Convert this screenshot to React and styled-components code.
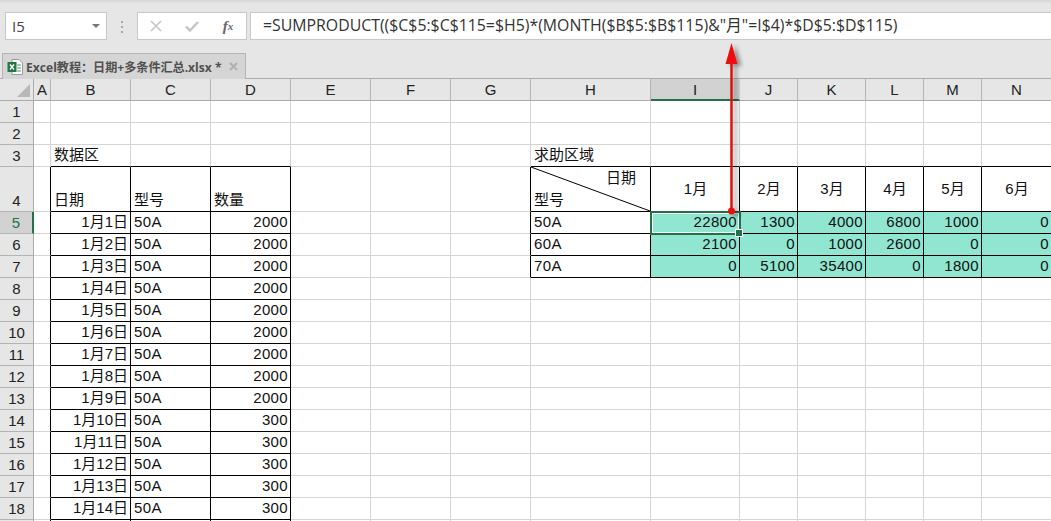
import React from 'react';
import styled, { createGlobalStyle } from 'styled-components';

const GlobalStyle = createGlobalStyle`
  html, body {
    margin: 0;
    height: 521px;
    overflow: hidden;
    background: #fff;
  }
`;

const FONT = `"Liberation Sans", "Noto Sans CJK SC", sans-serif`;
const UI_FONT = `"Open Sans", "Noto Sans CJK SC", sans-serif`;

const COLS = ['A', 'B', 'C', 'D', 'E', 'F', 'G', 'H', 'I', 'J', 'K', 'L', 'M', 'N'];
const COL_WIDTHS = [17, 80, 80, 80, 80, 80, 80, 120, 89, 58, 68, 58, 58, 70];

const Page = styled.div`
  position: relative;
  width: 1051px;
  height: 521px;
  overflow: hidden;
  background: #e6e6e6;
  font-family: ${FONT};
`;

const FormulaBar = styled.div`
  display: flex;
  align-items: flex-start;
  height: 53px;
  box-sizing: border-box;
  padding: 12px 0 0 5px;
  background: linear-gradient(#d6d6d6 0, #e6e6e6 4px);
`;

const NameBox = styled.div`
  display: flex;
  align-items: center;
  justify-content: space-between;
  box-sizing: border-box;
  width: 102px;
  height: 28px;
  padding: 0 6px 0 6px;
  background: #fff;
  border: 1px solid #c8c8c8;
  font-family: ${UI_FONT};
  font-size: 15px;
  color: #444;
`;

const Caret = styled.span`
  width: 0;
  height: 0;
  border-left: 4px solid transparent;
  border-right: 4px solid transparent;
  border-top: 4px solid #777;
`;

const Dots = styled.div`
  display: flex;
  flex-direction: column;
  gap: 3px;
  width: 4px;
  margin: 9px 12px 0 14px;

  span {
    width: 2px;
    height: 2px;
    background: #a6a6a6;
  }
`;

const ActionBox = styled.div`
  display: flex;
  align-items: center;
  box-sizing: border-box;
  width: 110px;
  height: 28px;
  margin-right: 3px;
  background: #fff;
  border: 1px solid #c8c8c8;
`;

const ActionIcon = styled.span`
  display: flex;
  align-items: center;
  justify-content: center;
  width: 36px;
  height: 100%;
  font-family: "Liberation Serif", serif;
  font-style: italic;
  font-weight: 700;
  font-size: 15px;
  color: #666;

  sub {
    font-size: 11px;
    vertical-align: -1px;
    line-height: 0;
  }
`;

const FormulaInput = styled.div`
  flex: 1;
  box-sizing: border-box;
  height: 28px;
  padding: 0 0 0 12px;
  background: #fff;
  border: 1px solid #c8c8c8;
  border-right: none;
  font-family: ${UI_FONT};
  font-size: 15.85px;
  line-height: 25px;
  color: #333;
  white-space: nowrap;
`;

const TabStrip = styled.div`
  height: 26px;
  box-sizing: border-box;
  padding-left: 2px;
  border-bottom: 1px solid #ababab;
`;

const Tab = styled.div`
  display: inline-flex;
  align-items: center;
  box-sizing: border-box;
  width: 244px;
  height: 26px;
  padding: 0 7px 0 4px;
  background: #d5d5d5;
  border: 1px solid #b4b4b4;
  border-bottom: none;
  font-family: ${UI_FONT};
  font-size: 12.1px;
  font-weight: 700;
  color: #505050;
  white-space: nowrap;
`;

const TabLabel = styled.span`
  flex: 1;
  margin-left: 2px;
`;

const TabClose = styled.svg`
  width: 9px;
  height: 9px;
`;

const Grid = styled.div`
  display: grid;
  grid-template-columns: 34px ${COL_WIDTHS.map((w) => `${w}px`).join(' ')};
  grid-template-rows: 22px 22px 22px 22px 45px;
  grid-auto-rows: 22px;
`;

const Corner = styled.div`
  position: relative;
  background: #e6e6e6;
  border-right: 1px solid #ababab;
  border-bottom: 1px solid #ababab;

  &::after {
    content: '';
    position: absolute;
    right: 3px;
    bottom: 3px;
    border-left: 13px solid transparent;
    border-bottom: 13px solid #b8b8b8;
  }
`;

const ColHeader = styled.div`
  display: flex;
  align-items: center;
  justify-content: center;
  box-sizing: border-box;
  background: ${(p) => (p.$active ? '#d2d2d2' : '#e6e6e6')};
  border-right: 1px solid ${(p) => (p.$active ? '#d2d2d2' : '#b4b4b4')};
  border-bottom: ${(p) => (p.$active ? '2px solid #217346' : '1px solid #ababab')};
  font-size: 15px;
  color: #222;
`;

const RowHeader = styled.div`
  display: flex;
  align-items: ${(p) => (p.$height > 22 ? 'flex-end' : 'center')};
  justify-content: center;
  box-sizing: border-box;
  height: ${(p) => p.$height}px;
  padding-bottom: ${(p) => (p.$height > 22 ? 2 : 0)}px;
  background: ${(p) => (p.$active ? '#d2d2d2' : '#e6e6e6')};
  border-bottom: 1px solid #b4b4b4;
  border-right: ${(p) => (p.$active ? '2px solid #217346' : '1px solid #ababab')};
  font-size: 15px;
  color: ${(p) => (p.$active ? '#217346' : '#222')};
`;

const Cell = styled.div`
  position: relative;
  z-index: ${(p) => (p.$selected ? 2 : 'auto')};
  display: flex;
  align-items: ${(p) => p.$valign || 'center'};
  justify-content: ${(p) => p.$align || 'flex-start'};
  box-sizing: border-box;
  height: ${(p) => p.$height}px;
  padding: 0 2px ${(p) => (p.$valign ? 2 : 1)}px 3px;
  background: ${(p) => (p.$fill ? '#90e6d0' : '#fff')};
  border-right: 1px solid ${(p) => (p.$right ? '#000' : p.$fill ? '#84d6c2' : '#d4d4d4')};
  border-bottom: 1px solid ${(p) => (p.$bottom ? '#000' : p.$fill ? '#84d6c2' : '#d4d4d4')};
  font-size: 15px;
  line-height: 18px;
  letter-spacing: ${(p) => (p.$wide ? '0.35px' : 'normal')};
  color: #111;
  white-space: nowrap;
`;

const Selection = styled.div`
  position: absolute;
  left: -1px;
  top: -1px;
  width: 91px;
  height: 24px;
  box-sizing: border-box;
  border: 2px solid #217346;
  box-shadow: inset 0 0 0 1px #fff;
  pointer-events: none;

  &::after {
    content: '';
    position: absolute;
    right: -3px;
    bottom: -3px;
    box-sizing: border-box;
    width: 6px;
    height: 6px;
    background: #217346;
    outline: 1px solid #fff;
  }
`;

const CellText = styled.span`
  position: relative;
  z-index: 1;
`;

const Slash = styled.svg`
  position: absolute;
  left: 0;
  top: 0;
  width: 120px;
  height: 45px;
`;

const CornerTop = styled.span`
  position: absolute;
  right: 14px;
  top: 2px;
`;

const CornerBottom = styled.span`
  position: absolute;
  left: 3px;
  bottom: 2px;
`;

const Arrow = styled.svg`
  position: absolute;
  z-index: 3;
  left: 715px;
  top: 40px;
  width: 36px;
  height: 180px;
  overflow: visible;
  pointer-events: none;
`;

const sales = {
  5: [22800, 1300, 4000, 6800, 1000, 0],
  6: [2100, 0, 1000, 2600, 0, 0],
  7: [0, 5100, 35400, 0, 1800, 0],
};
const models = { 5: '50A', 6: '60A', 7: '70A' };

// row 19 only shows its top border in the window, so it stays empty
const LAST_TEXT_ROW = 18;

const cellProps = (row, idx) => {
  const col = COLS[idx];
  const props = { $height: row === 4 ? 45 : 22 };

  // left table borders, B4 to the bottom of the view
  if (col === 'A' && row >= 4) props.$right = true;
  if (['B', 'C', 'D'].includes(col)) {
    if (row >= 4) props.$right = true;
    if (row >= 3) props.$bottom = true;
  }

  // right table borders, H4:N7
  if (col === 'G' && row >= 4 && row <= 7) props.$right = true;
  if (idx >= 7) {
    if (row >= 4 && row <= 7) props.$right = true;
    if (row >= 3 && row <= 7) props.$bottom = true;
    if (row >= 5 && row <= 7 && idx >= 8) props.$fill = true;
  }
  if (row === 5 && col === 'I') props.$selected = true;
  return props;
};

const cellContent = (row, idx) => {
  const col = COLS[idx];
  if (row > LAST_TEXT_ROW) return {};
  if (row === 3 && col === 'B') return { text: '数据区' };
  if (row === 3 && col === 'H') return { text: '求助区域' };
  if (row === 4) {
    if (col === 'B') return { text: '日期', $valign: 'flex-end' };
    if (col === 'C') return { text: '型号', $valign: 'flex-end' };
    if (col === 'D') return { text: '数量', $valign: 'flex-end' };
    if (idx >= 8) return { text: `${idx - 7}月`, $align: 'center' };
  }
  if (row >= 5) {
    if (col === 'B') return { text: `1月${row - 4}日`, $align: 'flex-end' };
    if (col === 'C') return { text: '50A', $wide: true };
    if (col === 'D') return { text: row <= 13 ? '2000' : '300', $align: 'flex-end', $wide: true };
  }
  if (models[row]) {
    if (col === 'H') return { text: models[row], $wide: true };
    if (idx >= 8) return { text: String(sales[row][idx - 8]), $align: 'flex-end', $wide: true };
  }
  return {};
};

const rows = Array.from({ length: 19 }, (_, i) => i + 1);

function ExcelIcon() {
  return (
    <svg width="17" height="18" viewBox="0 0 17 18">
      <path d="M5 1.5H12L15.5 5V16.5H5Z" fill="#fff" stroke="#9a9a9a" />
      <path d="M10 7H14M10 10H14M10 13H14" stroke="#8fb89f" strokeWidth="1.4" />
      <rect x="0.5" y="4" width="9" height="10" fill="#1f7a45" />
      <path d="M3 6.5 7 11.5M7 6.5 3 11.5" stroke="#fff" strokeWidth="1.4" />
    </svg>
  );
}

export default function App() {
  return (
    <Page>
      <GlobalStyle />
      <FormulaBar>
        <NameBox>
          I5
          <Caret />
        </NameBox>
        <Dots>
          <span />
          <span />
          <span />
        </Dots>
        <ActionBox>
          <ActionIcon>
            <svg width="12" height="12" viewBox="0 0 12 12">
              <path d="M1 1 11 11M11 1 1 11" stroke="#c4c4c4" strokeWidth="1.5" fill="none" />
            </svg>
          </ActionIcon>
          <ActionIcon>
            <svg width="14" height="12" viewBox="0 0 14 12">
              <path d="M1 6.5 5 10.5 13 2" stroke="#c4c4c4" strokeWidth="2.4" fill="none" />
            </svg>
          </ActionIcon>
          <ActionIcon>f<sub>x</sub></ActionIcon>
        </ActionBox>
        <FormulaInput>
          =SUMPRODUCT(($C$5:$C$115=$H5)*(MONTH($B$5:$B$115)&amp;"月"=I$4)*$D$5:$D$115)
        </FormulaInput>
      </FormulaBar>

      <TabStrip>
        <Tab>
          <ExcelIcon />
          <TabLabel>Excel教程：日期+多条件汇总.xlsx *</TabLabel>
          <TabClose viewBox="0 0 9 9">
            <path d="M1 1 8 8M8 1 1 8" stroke="#b0b0b0" strokeWidth="2" fill="none" />
          </TabClose>
        </Tab>
      </TabStrip>

      <Grid>
        <Corner />
        {COLS.map((c) => (
          <ColHeader key={c} $active={c === 'I'}>{c}</ColHeader>
        ))}
        {rows.map((row) => (
          <React.Fragment key={row}>
            <RowHeader $height={row === 4 ? 45 : 22} $active={row === 5}>
              {row <= LAST_TEXT_ROW ? row : ''}
            </RowHeader>
            {COLS.map((c, idx) => {
              const { text, ...align } = cellContent(row, idx);
              return (
                <Cell key={c} {...cellProps(row, idx)} {...align}>
                  {row === 4 && c === 'H' && (
                    <>
                      <Slash viewBox="0 0 120 45">
                        <line x1="0" y1="0" x2="119" y2="44" stroke="#000" strokeWidth="1" />
                      </Slash>
                      <CornerTop>日期</CornerTop>
                      <CornerBottom>型号</CornerBottom>
                    </>
                  )}
                  {text && <CellText>{text}</CellText>}
                  {row === 5 && c === 'I' && <Selection />}
                </Cell>
              );
            })}
          </React.Fragment>
        ))}
      </Grid>

      <Arrow viewBox="0 0 36 180">
        <defs>
          <filter id="arrow-shadow" x="-50%" y="-10%" width="200%" height="120%">
            <feDropShadow dx="4" dy="2" stdDeviation="2.2" floodColor="#000" floodOpacity="0.4" />
          </filter>
        </defs>
        <g filter="url(#arrow-shadow)">
          <line x1="16.5" y1="22" x2="16.5" y2="171" stroke="#e01010" strokeWidth="2.5" />
          <path d="M16.5 3 22.5 24H10.5Z" fill="#ee1111" />
          <circle cx="16.5" cy="171" r="3.5" fill="#ee1111" />
        </g>
      </Arrow>
    </Page>
  );
}
